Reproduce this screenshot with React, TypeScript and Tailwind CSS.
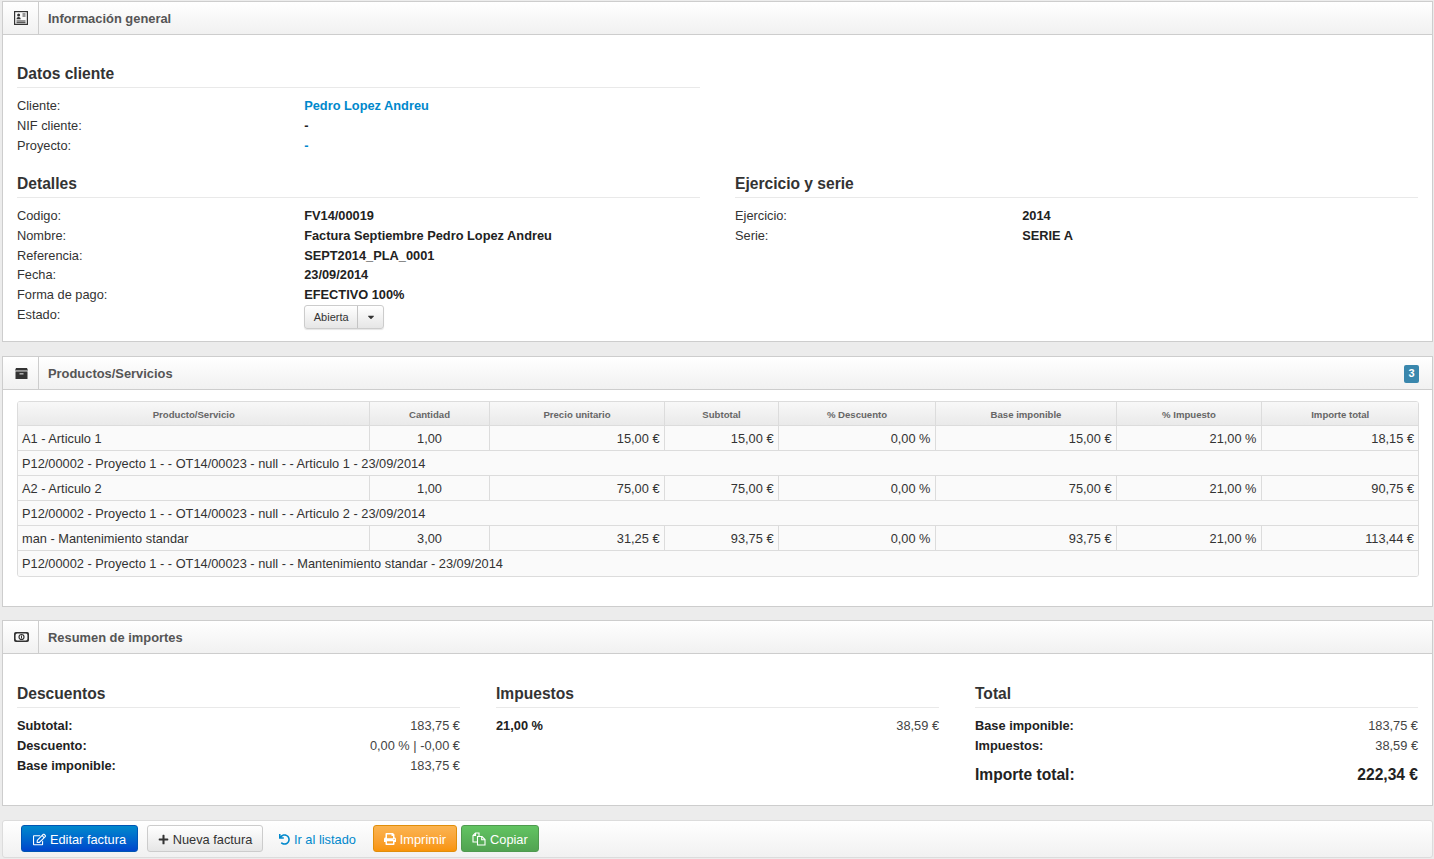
import { Fragment } from "react";
import type { ReactNode } from "react";
import { FaCaretDown, FaPlus, FaPrint, FaRegEdit, FaUndo } from "react-icons/fa";

const columns = [
  { label: "Producto/Servicio", width: "w-[351px]" },
  { label: "Cantidad", width: "w-[120px]" },
  { label: "Precio unitario", width: "w-[175px]" },
  { label: "Subtotal", width: "w-[114px]" },
  { label: "% Descuento", width: "w-[157px]" },
  { label: "Base imponible", width: "w-[181px]" },
  { label: "% Impuesto", width: "w-[145px]" },
  { label: "Importe total", width: "" },
];

const lines = [
  {
    name: "A1 - Articulo 1",
    values: ["1,00", "15,00 €", "15,00 €", "0,00 %", "15,00 €", "21,00 %", "18,15 €"],
    detail: "P12/00002 - Proyecto 1 - - OT14/00023 - null - - Articulo 1 - 23/09/2014",
  },
  {
    name: "A2 - Articulo 2",
    values: ["1,00", "75,00 €", "75,00 €", "0,00 %", "75,00 €", "21,00 %", "90,75 €"],
    detail: "P12/00002 - Proyecto 1 - - OT14/00023 - null - - Articulo 2 - 23/09/2014",
  },
  {
    name: "man - Mantenimiento standar",
    values: ["3,00", "31,25 €", "93,75 €", "0,00 %", "93,75 €", "21,00 %", "113,44 €"],
    detail: "P12/00002 - Proyecto 1 - - OT14/00023 - null - - Mantenimiento standar - 23/09/2014",
  },
];

function ProfileIcon() {
  return (
    <svg width="14" height="14" viewBox="0 0 14 14" fill="none">
      <rect x="0.6" y="0.6" width="12.8" height="12.8" stroke="#333" strokeWidth="1.2" />
      <circle cx="4.6" cy="4" r="1.5" fill="#333" />
      <path d="M2.5 8.2c0-1.6 1-2.3 2.1-2.3s2.1.7 2.1 2.3z" fill="#333" />
      <path d="M8.5 3h3M8.5 5h3M2.5 10h9M2.5 11.7h9" stroke="#333" strokeWidth="1" />
    </svg>
  );
}

function ArchiveIcon() {
  return (
    <svg width="13" height="11" viewBox="0 0 13 11" className="mt-[2px]">
      <path d="M1 0h11l1 2.6H0z" fill="#333" />
      <path d="M0.5 3.4h12V11H.5z" fill="#333" />
      <path d="M4.5 5h4v1.6h-4z" fill="#aaa" />
    </svg>
  );
}

function MoneyIcon() {
  return (
    <svg width="15" height="10" viewBox="0 0 15 10" fill="none" className="mt-px">
      <rect x="0.8" y="0.8" width="13.4" height="8.4" rx="1" stroke="#333" strokeWidth="1.6" />
      <circle cx="7.5" cy="5" r="2.5" stroke="#333" strokeWidth="1.2" />
      <path d="M7.5 3.5v3" stroke="#333" strokeWidth="1" />
      <path d="M1 1h2L1 3zM14 1h-2l2 2zM1 9h2L1 7zM14 9h-2l2-2z" fill="#333" />
    </svg>
  );
}

function FilesIcon() {
  return (
    <svg width="14" height="14" viewBox="0 0 14 14" fill="none" stroke="currentColor" strokeWidth="1.1">
      <path d="M5.5 10H1V3.5L3.5 1H7v3" />
      <path d="M3.5 1v2.5H1" />
      <path d="M5.5 4.5H10L13 7.5V13H5.5z" />
      <path d="M9.7 4.5v3.2H13" />
    </svg>
  );
}

function Widget({ icon, title, badge, children }: { icon: ReactNode; title: string; badge?: string; children: ReactNode }) {
  return (
    <section className="border border-[#cdcdcd] bg-white">
      <header className="flex h-[33px] items-center border-b border-[#cdcdcd] bg-gradient-to-b from-white to-[#f1f1f1]">
        <div className="flex h-full w-[36px] items-center justify-center border-r border-[#cdcdcd] pl-px">{icon}</div>
        <h2 className="ml-[9px] flex-1 pt-px text-[12.9px] font-bold text-[#555]">{title}</h2>
        {badge && (
          <span className="mt-[2px] mr-[13px] flex h-[18px] w-[15px] items-center justify-center rounded-[2px] bg-[#3a87ad] text-[11px] font-bold text-white">
            {badge}
          </span>
        )}
      </header>
      {children}
    </section>
  );
}

function SectionTitle({ children }: { children: ReactNode }) {
  return <h3 className="h-[25px] border-b border-[#e9e9e9] text-[15.6px] leading-[21px] font-bold text-[#333]">{children}</h3>;
}

function Field({ label, children }: { label: string; children: ReactNode }) {
  return (
    <div className="flex leading-[19.7px]">
      <span className="w-[42.05%] text-[#333]">{label}</span>
      <span className="font-bold text-[#222]">{children}</span>
    </div>
  );
}

function Amount({ label, value }: { label: string; value: string }) {
  return (
    <div className="flex justify-between leading-[20px]">
      <span className="font-bold text-[#222]">{label}</span>
      <span className="text-[#444]">{value}</span>
    </div>
  );
}

function ActionButton({ className, children }: { className: string; children: ReactNode }) {
  return (
    <button className={`flex h-[27px] items-center justify-center gap-[4px] rounded-[3px] border pt-px text-[12.8px] ${className}`}>
      {children}
    </button>
  );
}

export default function App() {
  return (
    <div className="flex min-h-[859px] flex-col gap-[14px] bg-[#ececec] pt-px pr-px pl-[2px] font-['Liberation_Sans',Arial,sans-serif] text-[12.8px] text-[#333]">
      <Widget icon={<ProfileIcon />} title="Información general">
        <div className="px-[14px] pt-[28px] pb-[12px]">
          <div className="w-[683px]">
            <SectionTitle>Datos cliente</SectionTitle>
            <div className="mt-[8.3px]">
              <Field label="Cliente:"><a className="text-[#0088cc]">Pedro Lopez Andreu</a></Field>
              <Field label="NIF cliente:">-</Field>
              <Field label="Proyecto:"><a className="text-[#0088cc]">-</a></Field>
            </div>
          </div>
          <div className="mt-[18px] grid grid-cols-2 gap-[35px]">
            <div>
              <SectionTitle>Detalles</SectionTitle>
              <div className="mt-[7.8px]">
                <Field label="Codigo:">FV14/00019</Field>
                <Field label="Nombre:">Factura Septiembre Pedro Lopez Andreu</Field>
                <Field label="Referencia:">SEPT2014_PLA_0001</Field>
                <Field label="Fecha:">23/09/2014</Field>
                <Field label="Forma de pago:">EFECTIVO 100%</Field>
                <Field label="Estado:">
                  <span className="flex h-[24px] w-[80px] rounded-[3px] border border-[#ccc] bg-gradient-to-b from-white to-[#e6e6e6] text-[11px] font-normal text-[#333] shadow-[0_1px_1px_rgba(0,0,0,0.1)]">
                    <span className="flex w-[53px] items-center justify-center border-r border-[#c4c4c4] pt-[2px]">Abierta</span>
                    <span className="flex flex-1 items-center justify-center"><FaCaretDown className="size-[10px]" /></span>
                  </span>
                </Field>
              </div>
            </div>
            <div>
              <SectionTitle>Ejercicio y serie</SectionTitle>
              <div className="mt-[7.8px]">
                <Field label="Ejercicio:">2014</Field>
                <Field label="Serie:">SERIE A</Field>
              </div>
            </div>
          </div>
        </div>
      </Widget>

      <Widget icon={<ArchiveIcon />} title="Productos/Servicios" badge="3">
        <div className="pt-[11px] pr-[13px] pb-[29px] pl-[14px]">
          <div className="overflow-hidden rounded-[3px] border border-[#dcdcdc]">
            <table className="w-full table-fixed border-collapse bg-[#fafafa]">
              <thead>
                <tr className="h-[24px] bg-gradient-to-b from-[#f8f8f8] to-[#e9e9e9]">
                  {columns.map((col) => (
                    <th key={col.label} className={`border-l border-[#dcdcdc] pt-[3px] pl-px text-center text-[9.6px] font-bold text-[#666] first:border-l-0 ${col.width}`}>
                      {col.label}
                    </th>
                  ))}
                </tr>
              </thead>
              <tbody>
                {lines.map((line) => (
                  <Fragment key={line.name}>
                    <tr className="h-[25px] border-t border-[#dcdcdc]">
                      <td className="px-[4px]">{line.name}</td>
                      {line.values.map((value, i) => (
                        <td key={i} className={`border-l border-[#dcdcdc] px-[4px] ${i === 0 ? "pl-[5px] text-center" : "text-right"}`}>
                          {value}
                        </td>
                      ))}
                    </tr>
                    <tr className="h-[25px] border-t border-[#dcdcdc]">
                      <td colSpan={8} className="px-[4px]">{line.detail}</td>
                    </tr>
                  </Fragment>
                ))}
              </tbody>
            </table>
          </div>
        </div>
      </Widget>

      <div className="-mt-px">
        <Widget icon={<MoneyIcon />} title="Resumen de importes">
          <div className="grid grid-cols-3 gap-[36px] px-[14px] pt-[29px] pb-[20px]">
            <div>
              <SectionTitle>Descuentos</SectionTitle>
              <div className="mt-[8px]">
                <Amount label="Subtotal:" value="183,75 €" />
                <Amount label="Descuento:" value="0,00 % | -0,00 €" />
                <Amount label="Base imponible:" value="183,75 €" />
              </div>
            </div>
            <div>
              <SectionTitle>Impuestos</SectionTitle>
              <div className="mt-[8px]">
                <Amount label="21,00 %" value="38,59 €" />
              </div>
            </div>
            <div>
              <SectionTitle>Total</SectionTitle>
              <div className="mt-[8px]">
                <Amount label="Base imponible:" value="183,75 €" />
                <Amount label="Impuestos:" value="38,59 €" />
                <div className="mt-[9px] flex justify-between text-[15.6px] leading-[20px] font-bold text-[#222]">
                  <span>Importe total:</span>
                  <span>222,34 €</span>
                </div>
              </div>
            </div>
          </div>
        </Widget>
      </div>

      <div className="flex h-[38px] items-center rounded-[3px] border border-[#dcdcdc] bg-gradient-to-b from-white to-[#f1f1f1] pl-[18px]">
        <ActionButton className="w-[117px] border-[#0055b3] bg-gradient-to-b from-[#0088cc] to-[#0044cc] text-white">
          <FaRegEdit className="size-[13px]" />Editar factura
        </ActionButton>
        <ActionButton className="ml-[9px] w-[116px] border-[#ccc] bg-gradient-to-b from-white to-[#e6e6e6] text-[#333]">
          <FaPlus className="size-[11px]" />Nueva factura
        </ActionButton>
        <a className="ml-[16px] flex items-center gap-[4px] pt-px text-[#0088cc]">
          <FaUndo className="size-[11px]" />Ir al listado
        </a>
        <ActionButton className="ml-[17px] w-[84px] border-[#e08e0b] bg-gradient-to-b from-[#fbb450] to-[#f89406] text-white">
          <FaPrint className="size-[12px]" />Imprimir
        </ActionButton>
        <ActionButton className="ml-[4px] w-[78px] border-[#4f9a4f] bg-gradient-to-b from-[#62c462] to-[#51a351] text-white">
          <FilesIcon />Copiar
        </ActionButton>
      </div>
    </div>
  );
}
